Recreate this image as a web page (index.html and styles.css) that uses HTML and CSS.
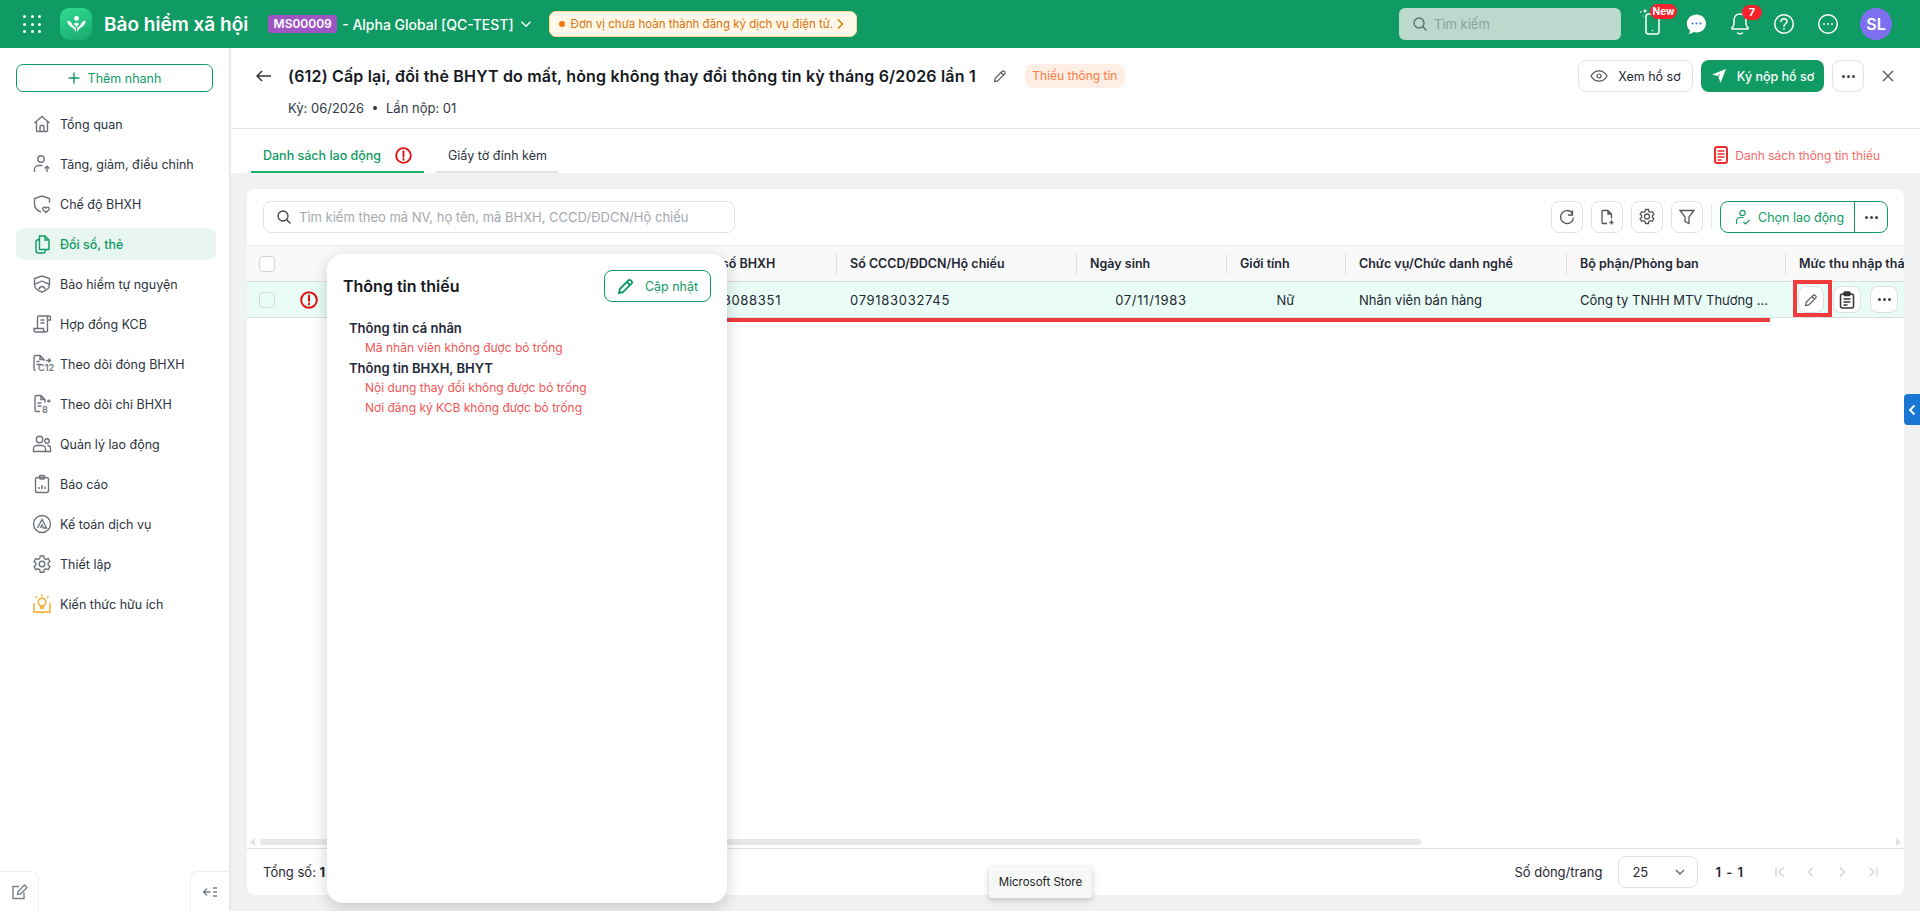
FILE: index.html
```html
<!DOCTYPE html>
<html lang="vi">
<head>
    <meta charset="UTF-8">
    <meta name="viewport" content="width=device-width, initial-scale=1.0">
    <title>Bảo hiểm xã hội</title>
    <link rel="stylesheet" href="styles.css">
</head>
<body>
    <header class="topbar">
        <div class="apps-grid">
            <i></i><i></i><i></i><i></i><i></i><i></i><i></i><i></i><i></i>
        </div>
        <div class="logo">
            <svg width="21" height="21" viewBox="0 0 24 24" fill="#fff">
                <circle cx="12" cy="5" r="2.800"/>
                <path d="M11.300 22c-.3-3.400-2.300-5.600-5-7C4.300 14 1.500 11.800 1.500 7.500c2.800.6 4.500 2 5.500 4.200.8 1.600 2.300 3 4.300 4z"/>
                <path d="M12.700 22c.3-3.400 2.300-5.600 5-7 2-1 4.800-3.200 4.800-7.500-2.800.6-4.500 2-5.500 4.200-.8 1.600-2.300 3-4.300 4z"/>
                <path d="M12 14.800l-3-3.300c.9-1 2-1.500 3-1.500s2.100.5 3 1.500z"/>
            </svg>
        </div>
        <div class="app-name">Bảo hiểm xã hội</div>
        <span class="company-code">MS00009</span>
        <span class="company-name">- Alpha Global [QC-TEST]</span>
        <svg class="company-caret" width="12" height="12" viewBox="0 0 12 12" fill="none" stroke="#fff" stroke-width="1.300"><path d="M1.500 3.800 6 8.300l4.500-4.500"/></svg>
        <div class="notice">
            <span class="notice-dot"></span>
            <span>Đơn vị chưa hoàn thành đăng ký dịch vụ điện tử.</span>
            <svg width="10" height="12" viewBox="0 0 10 12" fill="none" stroke="#d9730d" stroke-width="1.400"><path d="M3 1.500 7.500 6 3 10.500"/></svg>
        </div>
        <div class="top-search">
            <svg width="16" height="16" viewBox="0 0 16 16" fill="none" stroke="#5f6f69" stroke-width="1.400"><circle cx="7" cy="7" r="5"/><path d="m10.700 10.700 3.800 3.800"/></svg>
            <span>Tìm kiếm</span>
        </div>
        <div class="top-icons">
            <div class="top-icon">
                <svg width="24" height="32" viewBox="0 0 24 32" fill="none" stroke="#fff" stroke-width="1.500">
                    <rect x="6" y="6" width="13" height="20" rx="2.500"/>
                    <path d="M12.500 22.500v.1" stroke-linecap="round"/>
                    <path d="M5 0c.2 2 .8 2.800 3 3-2.200.2-2.800 1-3 3-.2-2-.8-2.800-3-3 2.200-.2 2.800-1 3-3z" fill="#fff" stroke="none"/>
                    <circle cx="0.500" cy="4" r=".8" fill="#fff" stroke="none"/>
                    <circle cx="3" cy="8" r=".6" fill="#fff" stroke="none"/>
                </svg>
                <span class="new-badge">New</span>
            </div>
            <div class="top-icon">
                <svg width="22" height="22" viewBox="0 0 22 22"><path d="M11.500 1.500c5 0 9.500 3.900 9.500 9s-4.300 9-9.500 9c-.9 0-1.900-.2-2.800-.4-1.400 1-3.100 1.800-5.200 1.900 1-1 1.500-2.200 1.400-3.600C3 15.700 1.800 13.300 1.800 10.500c0-5.100 4.500-9 9.700-9z" fill="#fff"/><circle cx="7.500" cy="10.500" r="1" fill="#3b6fe8"/><circle cx="11.500" cy="10.500" r="1" fill="#3b6fe8"/><circle cx="15.500" cy="10.500" r="1" fill="#3b6fe8"/></svg>
            </div>
            <div class="top-icon">
                <svg width="22" height="24" viewBox="0 0 22 24" fill="none" stroke="#fff" stroke-width="1.500"><path d="M11 2c-3.700 0-6 2.800-6 6.300v3.700c0 1.500-.9 2.600-2 3.700-.5.500-.1 1.300.5 1.300h15c.6 0 1-.8.500-1.300-1.100-1.100-2-2.200-2-3.700V8.300C17 4.800 14.700 2 11 2z"/><path d="M8.500 21c1.500 1 3.500 1 5 0" stroke-linecap="round"/></svg>
                <span class="count-badge">7</span>
            </div>
            <div class="top-icon">
                <svg width="22" height="22" viewBox="0 0 22 22" fill="none" stroke="#fff" stroke-width="1.500"><circle cx="11" cy="11" r="9.300"/><path d="M8 8.500C8 6.800 9.300 5.800 11 5.800s3 1.100 3 2.600c0 2.400-3 2.400-3 4.900M11 15.800v.4" stroke-linecap="round"/></svg>
            </div>
            <div class="top-icon">
                <svg width="22" height="22" viewBox="0 0 22 22" fill="none" stroke="#fff" stroke-width="1.500"><circle cx="11" cy="11" r="9.300"/><path d="M7 11h.1M11 11h.1M15 11h.1" stroke-width="1.800" stroke-linecap="round"/></svg>
            </div>
            <div class="avatar">SL</div>
        </div>
    </header>

    <div class="layout">
        <aside class="sidebar">
            <button class="quick-add">
                <svg width="12" height="12" viewBox="0 0 12 12" stroke="#0f9b63" stroke-width="1.400"><path d="M6 .5v11M.5 6h11"/></svg>
                Thêm nhanh
            </button>
            <nav class="nav">
                <a class="nav-item">
                    <svg viewBox="0 0 20 20"><path d="M2.500 9 10 2.500 17.500 9M4.500 7.500v9c0 .6.400 1 1 1h9c.6 0 1-.4 1-1v-9M8 17.500V12.500c0-.6.400-1 1-1h2c.6 0 1 .4 1 1v5"/></svg>
                    Tổng quan
                </a>
                <a class="nav-item">
                    <svg viewBox="0 0 20 20"><circle cx="9" cy="5" r="3.200"/><path d="M2.500 18v-2.500c0-2.300 2-4 4-4h4M15 18v-5.500M12.700 14.500l2.300-2.300 2.300 2.300"/></svg>
                    Tăng, giảm, điều chỉnh
                </a>
                <a class="nav-item">
                    <svg viewBox="0 0 20 20"><path d="M17.500 8.500V4.500L10 2 2.500 4.500v5.500c0 3.600 2.400 6.500 6.500 8"/><path d="M14 18.500l-3-3c-1.200-1.500 1.500-3.500 3-1.500 1.500-2 4.200 0 3 1.500z"/></svg>
                    Chế độ BHXH
                </a>
                <a class="nav-item active">
                    <svg viewBox="0 0 20 20"><path d="M7.500 2h5.500l4 4v9.500H7.500z"/><path d="M7.500 5.500c-2 0-3.500.8-3.500 2.500v8.500C4 18 5 19 6.500 19H11c1.500 0 2.500-1.300 2.500-3.500M13 2v4h4"/></svg>
                    Đổi sổ, thẻ
                </a>
                <a class="nav-item">
                    <svg viewBox="0 0 20 20"><path d="M10 2 2.500 4.500v5.500c0 4 3 6.800 7.500 8 4.500-1.200 7.500-4 7.500-8V4.500z"/><path d="M2.800 10c2.200-.6 4.800-1.500 7.200-3 2.400 1.500 5 2.400 7.200 3M6.500 15.500c1-2.300 2-3 3.500-3s2.500.7 3.500 3"/></svg>
                    Bảo hiểm tự nguyện
                </a>
                <a class="nav-item">
                    <svg viewBox="0 0 20 20"><path d="M5.500 14.500V3.500C5.500 2.600 6.200 2 7 2h10c.8 0 1.500.7 1.500 1.500V6h-3V3.500c0-.9-.7-1.500-1.500-1.500M15.500 6v10c0 1.300-.8 2-2 2H4c-1.200 0-2-.8-2-2v-1.500h9.500V16c0 1.300.8 2 2 2M8.500 6h4M8.500 9h4"/></svg>
                    Hợp đồng KCB
                </a>
                <a class="nav-item">
                    <svg viewBox="0 0 20 20"><path d="M3.500 16.500c-.8 0-1.500-.6-1.500-1.500V3c0-.9.700-1.500 1.500-1.500H8L12 5.500V7M8 1.500v4h4M4.500 7.500h3M4.500 10.500h5M14 6.500h4.500M16.500 4.500l2 2-2 2"/></svg>
                    <span class="nav-mini">C12</span>
                    Theo dõi đóng BHXH
                </a>
                <a class="nav-item">
                    <svg viewBox="0 0 20 20"><path d="M8 17.500H4.500C3.700 17.500 3 16.800 3 16V3c0-.8.700-1.500 1.500-1.500H9L13 5.500v3M9 1.500v4h4M5.500 9h4M5.500 12h4M15 7h3.500M17 5.500v3"/></svg>
                    <span class="nav-mini nav-mini-8">8</span>
                    Theo dõi chi BHXH
                </a>
                <a class="nav-item">
                    <svg viewBox="0 0 20 20"><circle cx="7.500" cy="5.500" r="3.200"/><circle cx="15" cy="7" r="2.200"/><path d="M1.500 17.500V15c0-2 1.800-3.500 3.500-3.500h5c1.700 0 3.500 1.500 3.500 3.500v2.500zM15.500 11.500c1.800 0 3 1.300 3 3v3h-5"/></svg>
                    Quản lý lao động
                </a>
                <a class="nav-item">
                    <svg viewBox="0 0 20 20"><rect x="3.500" y="3.500" width="13" height="15" rx="2"/><rect x="7.500" y="1.500" width="5" height="3.500" rx="1"/><path d="M7 15v-2M10 15v-4M13 15v-2.500"/></svg>
                    Báo cáo
                </a>
                <a class="nav-item">
                    <svg viewBox="0 0 20 20"><circle cx="10" cy="10" r="8.500"/><path d="M5.500 14 10 5.500l4.500 8.500h-3L10 11l-1.500 3"/></svg>
                    Kế toán dịch vụ
                </a>
                <a class="nav-item">
                    <svg viewBox="0 0 20 20"><path d="M8.300 2h3.400l.5 2.400 1.700 1 2.300-.8 1.700 3-1.800 1.600v1.800l1.800 1.600-1.700 3-2.300-.8-1.700 1-.5 2.400H8.300l-.5-2.400-1.700-1-2.300.8-1.700-3 1.800-1.600V9.200L2.100 7.600l1.700-3 2.300.8 1.700-1z"/><circle cx="10" cy="10" r="2.800"/></svg>
                    Thiết lập
                </a>
                <a class="nav-item">
                    <svg class="nav-orange" viewBox="0 0 20 20"><circle cx="10" cy="8" r="3.800"/><path d="M8.500 11.500V14h3v-2.500M10 .5v1.800M3.500 2.500 5 4M16.500 2.500 15 4M2 9v9h6c1 0 2 .8 2 .8s1-.8 2-.8h6V9"/></svg>
                    Kiến thức hữu ích
                </a>
            </nav>
            <div class="sidebar-foot">
                <button class="foot-btn">
                    <svg width="18" height="18" viewBox="0 0 18 18" fill="none" stroke="#7b818a" stroke-width="1.400"><path d="M9 3.500H3v12h11V9.500M7.500 11.500l.5-3 6.500-6.500 2.500 2.500-6.500 6.500z"/></svg>
                </button>
                <button class="foot-btn">
                    <svg width="16" height="16" viewBox="0 0 16 16" fill="none" stroke="#7b818a" stroke-width="1.400"><path d="M5 4.500 1.500 8 5 11.500M1.500 8h7M11 4h4M11 8h4M11 12h4"/></svg>
                </button>
            </div>
        </aside>

        <main class="main">
            <section class="page-head">
                <svg class="back" width="16" height="12" viewBox="0 0 16 12" fill="none" stroke="#333" stroke-width="1.500"><path d="M6 1 1 6l5 5M1 6h14"/></svg>
                <div class="page-title-wrap">
                    <div class="page-title-row">
                        <h1>(612) Cấp lại, đổi thẻ BHYT do mất, hỏng không thay đổi thông tin kỳ tháng 6/2026 lần 1</h1>
                        <svg width="14" height="14" viewBox="0 0 14 14" fill="none" stroke="#555" stroke-width="1.100"><path d="M1.500 12.500l.6-3.200 7-7c.6-.6 1.400-.6 2 0l.6.600c.6.600.6 1.400 0 2l-7 7zM8 3.500l2.500 2.500"/></svg>
                        <span class="status-chip">Thiếu thông tin</span>
                    </div>
                    <div class="page-sub">
                        <span>Kỳ: 06/2026</span>
                        <i></i>
                        <span>Lần nộp: 01</span>
                    </div>
                </div>
                <div class="head-actions">
                    <button class="btn btn-view">
                        <svg width="18" height="18" viewBox="0 0 18 18" fill="none" stroke="#555" stroke-width="1.200"><path d="M1 9c2-3.500 4.800-5.200 8-5.200s6 1.700 8 5.200c-2 3.500-4.800 5.200-8 5.200S3 12.500 1 9z"/><circle cx="9" cy="9" r="2"/></svg>
                        Xem hồ sơ
                    </button>
                    <button class="btn btn-send">
                        <svg width="16" height="16" viewBox="0 0 16 16" fill="#fff"><path d="M15 1 1 6.500l5.500 1.500 3-2.500-2 3.500 2 6z"/></svg>
                        Ký nộp hồ sơ
                    </button>
                    <button class="btn btn-more"><span class="dots"><i></i><i></i><i></i></span></button>
                    <svg class="close" width="12" height="12" viewBox="0 0 12 12" stroke="#555" stroke-width="1.300"><path d="m1 1 10 10M11 1 1 11"/></svg>
                </div>
            </section>

            <section class="tabs">
                <div class="tab tab-on">
                    Danh sách lao động
                    <svg class="alert-icon" width="17" height="17" viewBox="0 0 18 18"><circle cx="9" cy="9" r="7.800" fill="none" stroke="#e01010" stroke-width="2"/><path d="M9 4.500v5.500M9 12.500v1" stroke="#e01010" stroke-width="2" stroke-linecap="round"/></svg>
                </div>
                <div class="tab">Giấy tờ đính kèm</div>
                <div class="missing-link">
                    <svg width="14" height="18" viewBox="0 0 14 18"><rect x="1" y="1" width="12" height="16" rx="2" fill="none" stroke="#ee2b2b" stroke-width="2"/><path d="M3.500 5h7M3.500 8h7M3.500 11h7M3.500 14h4" stroke="#ee2b2b" stroke-width="1.300"/></svg>
                    Danh sách thông tin thiếu
                </div>
            </section>

            <section class="content">
                <div class="card">
                    <div class="toolbar">
                        <div class="table-search">
                            <svg width="16" height="16" viewBox="0 0 16 16" fill="none" stroke="#444" stroke-width="1.300"><circle cx="7" cy="7" r="5"/><path d="m10.700 10.700 3.800 3.800"/></svg>
                            <span>Tìm kiếm theo mã NV, họ tên, mã BHXH, CCCD/ĐDCN/Hộ chiếu</span>
                        </div>
                        <div class="tools">
                            <button class="tool">
                                <svg viewBox="0 0 18 18"><path d="M14.500 2.500V7H10M15.500 9.500a6.500 6.500 0 1 1-1.800-5l.8 2.500"/></svg>
                            </button>
                            <button class="tool">
                                <svg viewBox="0 0 18 18"><path d="M9 15.500H5c-.6 0-1-.4-1-1v-11c0-.6.400-1 1-1h5l3.500 3.500v4.500M10 2.500V6h3.500M13.500 12v4.500M11.500 14.500h4"/></svg>
                            </button>
                            <button class="tool">
                                <svg viewBox="0 0 18 18"><path d="M7.500 1.500h3l.4 2 1.600.9 1.900-.7 1.500 2.600-1.500 1.300v1.800l1.500 1.300-1.500 2.600-1.900-.7-1.600.9-.4 2h-3l-.4-2-1.600-.9-1.900.7-1.500-2.600 1.500-1.300V7.600L2.100 6.300l1.500-2.600 1.900.7 1.600-.9z"/><circle cx="9" cy="8.500" r="2.500"/></svg>
                            </button>
                            <button class="tool">
                                <svg viewBox="0 0 18 18"><path d="M2 2.500h14l-5 6.500v6.500l-4-2V9z"/></svg>
                            </button>
                            <span class="tool-sep"></span>
                            <div class="pick-group">
                                <button class="pick-main">
                                    <svg width="16" height="16" viewBox="0 0 16 16" fill="none" stroke="#0f9b63" stroke-width="1.200"><circle cx="7.500" cy="4" r="2.700"/><path d="M1.500 15v-2.500c0-2 1.500-4 4-4h3M8.500 13l2 2 4-4"/></svg>
                                    Chọn lao động
                                </button>
                                <button class="pick-more"><span class="dots"><i></i><i></i><i></i></span></button>
                            </div>
                        </div>
                    </div>

                    <div class="table">
                        <div class="table-head">
                            <div class="cell-first"><span class="checkbox"></span></div>
                            <div class="th"></div>
                            <div class="th"></div>
                            <div class="th">Mã số BHXH</div>
                            <div class="th">Số CCCD/ĐDCN/Hộ chiếu</div>
                            <div class="th">Ngày sinh</div>
                            <div class="th">Giới tính</div>
                            <div class="th">Chức vụ/Chức danh nghề</div>
                            <div class="th">Bộ phận/Phòng ban</div>
                            <div class="th">Mức thu nhập thá</div>
                        </div>
                        <div class="table-row">
                            <div class="cell-first">
                                <span class="checkbox"></span>
                                <svg class="row-alert" width="18" height="18" viewBox="0 0 18 18"><circle cx="9" cy="9" r="7.800" fill="none" stroke="#e01010" stroke-width="2"/><path d="M9 4.500v5.500M9 12.500v1" stroke="#e01010" stroke-width="2" stroke-linecap="round"/></svg>
                            </div>
                            <div class="td"></div>
                            <div class="td"></div>
                            <div class="td td-num">7913088351</div>
                            <div class="td td-num">079183032745</div>
                            <div class="td td-num td-center">07/11/1983</div>
                            <div class="td td-center">Nữ</div>
                            <div class="td">Nhân viên bán hàng</div>
                            <div class="td">Công ty TNHH MTV Thương ...</div>
                            <div class="td-actions">
                                <button class="row-btn row-btn-edit">
                                    <svg width="14" height="14" viewBox="0 0 14 14" fill="none" stroke="#555" stroke-width="1.100"><path d="M1.500 12.500l.6-3.200 7-7c.6-.6 1.400-.6 2 0l.6.600c.6.600.6 1.400 0 2l-7 7zM8 3.500l2.500 2.500"/></svg>
                                    <span class="mark-box"></span>
                                </button>
                                <button class="row-btn">
                                    <svg width="16" height="18" viewBox="0 0 16 18" fill="none" stroke="#333" stroke-width="1.500"><rect x="1.500" y="3" width="13" height="14" rx="2"/><rect x="5" y="1" width="6" height="3.500" rx="1" fill="#333"/><path d="M4.500 8h7M4.500 11h7M4.500 14h4"/></svg>
                                </button>
                                <button class="row-btn"><span class="dots"><i></i><i></i><i></i></span></button>
                            </div>
                            <span class="mark-line"></span>
                        </div>
                        <div class="table-empty"></div>
                        <div class="scrollbar">
                            <span class="scroll-arrow scroll-left"></span>
                            <span class="scroll-thumb"></span>
                            <span class="scroll-arrow scroll-right"></span>
                        </div>
                    </div>

                    <div class="table-foot">
                        <div class="total">Tổng số: <b>1</b></div>
                        <div class="pager">
                            <span>Số dòng/trang</span>
                            <div class="page-size">
                                25
                                <svg width="12" height="12" viewBox="0 0 12 12" fill="none" stroke="#666" stroke-width="1.400"><path d="M2 4l4 4 4-4"/></svg>
                            </div>
                            <b class="page-range">1 - 1</b>
                            <div class="page-arrows">
                                <svg viewBox="0 0 12 12"><path d="M2 1.500v9M9.500 1.500 5 6l4.500 4.500"/></svg>
                                <svg viewBox="0 0 12 12"><path d="M8 1.500 3.500 6 8 10.500"/></svg>
                                <svg viewBox="0 0 12 12"><path d="M4 1.500 8.500 6 4 10.500"/></svg>
                                <svg viewBox="0 0 12 12"><path d="M2.500 1.500 7 6l-4.500 4.500M10 1.500v9"/></svg>
                            </div>
                        </div>
                    </div>
                </div>

                <div class="missing-pop">
                    <div class="pop-head">
                        <div class="pop-title">Thông tin thiếu</div>
                        <button class="pop-update">
                            <svg width="18" height="18" viewBox="0 0 18 18" fill="none" stroke="#0f9b63" stroke-width="1.800"><path d="M2 16l.8-4 8.500-8.500c.8-.8 1.800-.8 2.500 0l.7.700c.8.700.8 1.700 0 2.500L6 15.200zM10 5l3 3"/></svg>
                            Cập nhật
                        </button>
                    </div>
                    <div class="pop-body">
                        <div class="pop-group">Thông tin cá nhân</div>
                        <div class="pop-item">Mã nhân viên không được bỏ trống</div>
                        <div class="pop-group">Thông tin BHXH, BHYT</div>
                        <div class="pop-item">Nội dung thay đổi không được bỏ trống</div>
                        <div class="pop-item">Nơi đăng ký KCB không được bỏ trống</div>
                    </div>
                </div>

                <div class="store-tip">Microsoft Store</div>
            </section>
        </main>
    </div>

    <div class="side-tab">
        <svg width="8" height="12" viewBox="0 0 8 12" fill="none" stroke="#fff" stroke-width="2"><path d="M6.500 1.500 2 6l4.500 4.500"/></svg>
    </div>
</body>
</html>
```

FILE: styles.css
```css
/* Base */
* {
    box-sizing: border-box;
}

body {
    margin: 0;
    height: 100vh;
    overflow: hidden;
    display: flex;
    flex-direction: column;
    font-family: Inter, "Noto Sans", sans-serif;
    font-size: 13px;
    color: #1f2733;
    background: #fff;
}

button {
    font-family: inherit;
    font-size: 12.500px;
    cursor: pointer;
}

.dots {
    display: flex;
    gap: 2px;
}

.dots i {
    width: 3px;
    height: 3px;
    border-radius: 50%;
    background: #444;
}

/* Top bar */
.topbar {
    height: 48px;
    flex: none;
    display: flex;
    align-items: center;
    padding-left: 23px;
    background: #0f9b63;
    color: #fff;
}

.apps-grid {
    width: 18px;
    display: grid;
    grid-template-columns: repeat(3, 3px);
    justify-content: space-between;
    row-gap: 4.500px;
}

.apps-grid i {
    width: 3px;
    height: 3px;
    border-radius: 50%;
    background: #fff;
}

.logo {
    width: 32px;
    height: 32px;
    margin-left: 19px;
    display: flex;
    align-items: center;
    justify-content: center;
    border-radius: 9px;
    background: linear-gradient(160deg, #30dc93, #18a86c);
}

.app-name {
    margin-left: 12px;
    font-size: 19px;
    font-weight: 600;
    white-space: nowrap;
}

.company-code {
    margin-left: 20px;
    width: 69px;
    height: 18px;
    line-height: 18px;
    text-align: center;
    border-radius: 3px;
    background: #9d55c4;
    font-size: 12px;
    font-weight: 600;
}

.company-name {
    margin-left: 5px;
    font-size: 14px;
    font-weight: 500;
    white-space: nowrap;
}

.company-caret {
    margin-left: 6px;
}

.notice {
    margin-left: 17px;
    width: 308px;
    height: 26px;
    padding: 0 11px 0 9px;
    display: flex;
    align-items: center;
    border: 1px solid #ffd98f;
    border-radius: 7px;
    background: #fff7e8;
    color: #d9730d;
    font-size: 11.500px;
    white-space: nowrap;
}

.notice-dot {
    width: 6px;
    height: 6px;
    flex: none;
    margin-right: 6px;
    border-radius: 50%;
    background: #f07a12;
}

.notice svg {
    margin-left: auto;
}

.top-search {
    margin-left: auto;
    width: 222px;
    height: 32px;
    padding-left: 13px;
    display: flex;
    align-items: center;
    gap: 6px;
    border-radius: 6px;
    background: #bcd9cd;
    color: #86a398;
}

.top-icons {
    display: flex;
    align-items: center;
    margin-left: 9px;
    margin-right: 28px;
}

.top-icon {
    position: relative;
    width: 44px;
    height: 32px;
    display: flex;
    align-items: center;
    justify-content: center;
}

.new-badge {
    position: absolute;
    top: -4px;
    left: 20px;
    width: 27px;
    height: 15px;
    line-height: 15px;
    text-align: center;
    border-radius: 8px;
    background: #f5222d;
    font-size: 10px;
    font-weight: 700;
}

.count-badge {
    position: absolute;
    top: -3px;
    left: 24px;
    width: 20px;
    height: 15px;
    line-height: 15px;
    text-align: center;
    border-radius: 8px;
    background: #f5222d;
    font-size: 11px;
    font-weight: 700;
}

.avatar {
    width: 32px;
    height: 32px;
    margin-left: 10px;
    line-height: 32px;
    text-align: center;
    border-radius: 50%;
    background: #7d6ff0;
    font-size: 16px;
    font-weight: 600;
}

/* Layout */
.layout {
    flex: 1;
    min-height: 0;
    display: flex;
}

.sidebar {
    width: 231px;
    flex: none;
    display: flex;
    flex-direction: column;
    padding-top: 16px;
    border-right: 2px solid #e6e8eb;
}

.quick-add {
    width: 197px;
    height: 28px;
    margin-left: 16px;
    display: flex;
    align-items: center;
    justify-content: center;
    gap: 8px;
    border: 1px solid #0f9b63;
    border-radius: 7px;
    background: #fff;
    color: #0f9b63;
}

.nav {
    margin-top: 16px;
    padding: 0 13px 0 16px;
    display: flex;
    flex-direction: column;
    gap: 8px;
}

.nav-item {
    position: relative;
    height: 32px;
    padding-left: 16px;
    display: flex;
    align-items: center;
    gap: 8px;
    border-radius: 8px;
    font-size: 12.500px;
    color: #2b3340;
}

.nav-item svg {
    width: 20px;
    height: 20px;
    flex: none;
    fill: none;
    stroke: #6d737c;
    stroke-width: 1.400;
}

.nav-item.active {
    background: #e8f5f0;
    color: #0f9b63;
    font-weight: 500;
}

.nav-item.active svg {
    stroke: #0f9b63;
}

.nav-item svg.nav-orange {
    stroke: #f5a524;
}

.nav-mini {
    position: absolute;
    left: 21px;
    top: 15px;
    padding: 0 1px;
    font-size: 9px;
    font-weight: 600;
    line-height: 10px;
    color: #6d737c;
}

.nav-mini-8 {
    left: 25px;
    top: 17px;
}

.sidebar-foot {
    margin-top: auto;
    display: flex;
    justify-content: space-between;
}

.foot-btn {
    width: 39px;
    height: 40px;
    display: flex;
    align-items: center;
    justify-content: center;
    padding: 0;
    border: 1px solid #eceef0;
    border-left: none;
    border-bottom: none;
    border-radius: 0 8px 0 0;
    background: #fff;
}

.foot-btn + .foot-btn {
    border-left: 1px solid #eceef0;
    border-right: none;
    border-radius: 8px 0 0 0;
}

.main {
    flex: 1;
    min-width: 0;
    display: flex;
    flex-direction: column;
}

/* Page header */
.page-head {
    height: 81px;
    flex: none;
    padding: 12px 24px 0 25px;
    display: flex;
    align-items: flex-start;
    border-bottom: 1px solid #e2e4e8;
}

.back {
    margin-top: 10px;
}

.page-title-wrap {
    margin-left: 16px;
}

.page-title-row {
    height: 32px;
    display: flex;
    align-items: center;
}

.page-title-row h1 {
    margin: 0 17px 0 0;
    font-size: 16px;
    font-weight: 600;
    letter-spacing: .18px;
    color: #15191f;
}

.status-chip {
    margin-left: 18px;
    width: 100px;
    height: 24px;
    line-height: 24px;
    text-align: center;
    border-radius: 8px;
    background: #ffeee6;
    font-size: 12px;
    color: #ff7a3d;
}

.page-sub {
    margin-top: 8px;
    display: flex;
    align-items: center;
    gap: 9px;
    color: #333a45;
}

.page-sub i {
    width: 4px;
    height: 4px;
    border-radius: 50%;
    background: #333;
}

.head-actions {
    margin-left: auto;
    display: flex;
    align-items: center;
    gap: 8px;
}

.btn {
    height: 32px;
    display: flex;
    align-items: center;
    justify-content: center;
    gap: 10px;
    border-radius: 8px;
    padding: 0;
}

.btn-view {
    width: 115px;
    border: 1px solid #dfe1e5;
    background: #fff;
    color: #1f2733;
}

.btn-send {
    width: 123px;
    border: none;
    background: #0f9b63;
    color: #fff;
    font-weight: 500;
}

.btn-more {
    width: 32px;
    border: 1px solid #dfe1e5;
    background: #fff;
}

.close {
    margin-left: 10px;
    margin-right: 2px;
}

/* Tabs */
.tabs {
    height: 44px;
    flex: none;
    padding: 0 40px 0 20px;
    display: flex;
    align-items: stretch;
    gap: 12px;
}

.tab {
    width: 122px;
    padding: 10px 12px 0;
    display: flex;
    align-items: center;
    border-bottom: 2px solid #e0e2e6;
    font-size: 12.500px;
    color: #2b3340;
    white-space: nowrap;
}

.tab-on {
    width: 173px;
    gap: 14px;
    border-bottom-color: #1ab16e;
    color: #0f9b63;
    font-weight: 500;
}

.missing-link {
    margin-left: auto;
    padding-top: 8px;
    display: flex;
    align-items: center;
    gap: 7px;
    font-size: 12px;
    color: #f46a6a;
}

/* Content */
.content {
    position: relative;
    flex: 1;
    min-height: 0;
    padding: 16px;
    background: #f0f1f3;
}

.card {
    height: 100%;
    display: flex;
    flex-direction: column;
    border-radius: 8px;
    background: #fff;
    overflow: hidden;
}

.toolbar {
    height: 56px;
    flex: none;
    padding: 12px 16px 0;
    display: flex;
    justify-content: space-between;
}

.table-search {
    width: 472px;
    height: 32px;
    padding-left: 12px;
    display: flex;
    align-items: center;
    gap: 7px;
    border: 1px solid #dfe1e5;
    border-radius: 8px;
    color: #a3a8b0;
}

.tools {
    display: flex;
    gap: 8px;
}

.tool {
    width: 32px;
    height: 32px;
    padding: 0;
    display: flex;
    align-items: center;
    justify-content: center;
    border: 1px solid #dfe1e5;
    border-radius: 8px;
    background: #fff;
}

.tool svg {
    width: 18px;
    height: 18px;
    fill: none;
    stroke: #555;
    stroke-width: 1.300;
}

.tool-sep {
    width: 1px;
    height: 24px;
    margin: 4px 0 0;
    background: #e4e6e9;
}

.pick-group {
    width: 168px;
    height: 32px;
    display: flex;
    border: 1px solid #0f9b63;
    border-radius: 8px;
}

.pick-main {
    flex: 1;
    padding: 0 0 0 14px;
    display: flex;
    align-items: center;
    gap: 7px;
    border: none;
    border-right: 1px solid #0f9b63;
    background: none;
    color: #0f9b63;
}

.pick-more {
    width: 32px;
    padding: 0;
    display: flex;
    align-items: center;
    justify-content: center;
    border: none;
    background: none;
}

/* Table */
.table {
    flex: 1;
    min-height: 0;
    display: flex;
    flex-direction: column;
    overflow: hidden;
}

.table-head,
.table-row {
    flex: none;
    display: grid;
    grid-template-columns: 99px 170px 170px 150px 240px 150px 119px 221px 219px 200px;
    align-items: center;
}

.table-head {
    height: 37px;
    padding-top: 1px;
    border-top: 1px solid #e6e8eb;
    border-bottom: 1px solid #d9dce0;
    background: #f9f9f9;
    font-size: 12.500px;
    font-weight: 600;
    color: #1f2733;
}

.th {
    height: 20px;
    line-height: 20px;
    padding-left: 13px;
    border-left: 1px solid #dcdfe3;
    white-space: nowrap;
}

.table-row {
    position: relative;
    height: 36px;
    border-bottom: 1px solid #d9dce0;
    background: #e9fcf5;
}

.cell-first {
    display: flex;
    align-items: center;
    padding-left: 12px;
}

.checkbox {
    width: 16px;
    height: 16px;
    border: 1.500px solid #d3d6da;
    border-radius: 4px;
    background: #fff;
}

.table-row .checkbox {
    background: transparent;
}

.row-alert {
    margin-left: 25px;
}

.td {
    padding-left: 14px;
    white-space: nowrap;
}

.td-num {
    letter-spacing: .7px;
}

.td-center {
    padding-left: 0;
    text-align: center;
}

.td-actions {
    padding-left: 13px;
    display: flex;
    gap: 9px;
}

.row-btn {
    position: relative;
    width: 26px;
    height: 27px;
    padding: 0;
    display: flex;
    align-items: center;
    justify-content: center;
    border: 1px solid #dcdfe3;
    border-radius: 8px;
    background: #fff;
}

.row-btn + .row-btn {
    width: 28px;
}

.mark-box {
    position: absolute;
    top: -7px;
    right: -9px;
    bottom: -5px;
    left: -6px;
    border: 4px solid #ef3b3b;
}

.mark-line {
    position: absolute;
    left: 400px;
    bottom: -5px;
    width: 1123px;
    height: 4px;
    background: #ef3b3b;
}

.table-empty {
    flex: 1;
}

.scrollbar {
    height: 8px;
    flex: none;
    margin-bottom: 2px;
    padding: 0 3px;
    display: flex;
    align-items: center;
    gap: 5px;
}

.scroll-thumb {
    width: 1161px;
    height: 6px;
    border-radius: 3px;
    background: #e6e8ea;
}

.scroll-arrow {
    width: 0;
    height: 0;
    border-top: 4px solid transparent;
    border-bottom: 4px solid transparent;
}

.scroll-left {
    border-right: 5px solid #dfe1e4;
}

.scroll-right {
    margin-left: auto;
    border-left: 5px solid #dfe1e4;
}

.table-foot {
    height: 47px;
    flex: none;
    padding: 0 25px 0 16px;
    display: flex;
    align-items: center;
    justify-content: space-between;
    border-top: 1px solid #dcdfe3;
}

.pager {
    display: flex;
    align-items: center;
}

.page-size {
    width: 80px;
    height: 32px;
    margin-left: 16px;
    padding: 0 11px 0 13px;
    display: flex;
    align-items: center;
    justify-content: space-between;
    border: 1px solid #dcdfe3;
    border-radius: 8px;
}

.page-range {
    margin-left: 17px;
    font-weight: 600;
    letter-spacing: 1px;
}

.page-arrows {
    margin-left: 30px;
    display: flex;
    gap: 19px;
}

.page-arrows svg {
    width: 12px;
    height: 12px;
    fill: none;
    stroke: #cfd2d6;
    stroke-width: 1.300;
}

/* Popup over the table */
.missing-pop {
    position: absolute;
    top: 81px;
    left: 96px;
    width: 400px;
    height: 649px;
    padding: 16px 16px 0;
    border-radius: 16px;
    background: #fff;
    box-shadow: 0 4px 16px rgba(0, 0, 0, .18);
}

.pop-head {
    display: flex;
    align-items: center;
    justify-content: space-between;
}

.pop-title {
    font-size: 16px;
    font-weight: 600;
    color: #15191f;
}

.pop-update {
    width: 107px;
    height: 32px;
    padding: 0;
    display: flex;
    align-items: center;
    justify-content: center;
    gap: 10px;
    border: 1px solid #0f9b63;
    border-radius: 8px;
    background: #fff;
    color: #0f9b63;
}

.pop-body {
    margin-top: 16px;
    padding-left: 6px;
}

.pop-group {
    height: 20px;
    line-height: 20px;
    font-weight: 600;
    color: #1f2937;
}

.pop-item {
    height: 20px;
    line-height: 20px;
    padding-left: 16px;
    font-size: 12px;
    color: #f25555;
}

/* Window tooltip */
.store-tip {
    position: absolute;
    top: 694px;
    left: 758px;
    width: 103px;
    height: 31px;
    line-height: 31px;
    text-align: center;
    border-radius: 3px;
    background: #f6f8f7;
    box-shadow: 0 2px 6px rgba(0, 0, 0, .22);
    font-size: 11.500px;
    color: #222;
}

.side-tab {
    position: absolute;
    top: 394px;
    right: 0;
    width: 16px;
    height: 31px;
    display: flex;
    align-items: center;
    justify-content: center;
    border-radius: 4px 0 0 4px;
    background: #1976d2;
}
```
